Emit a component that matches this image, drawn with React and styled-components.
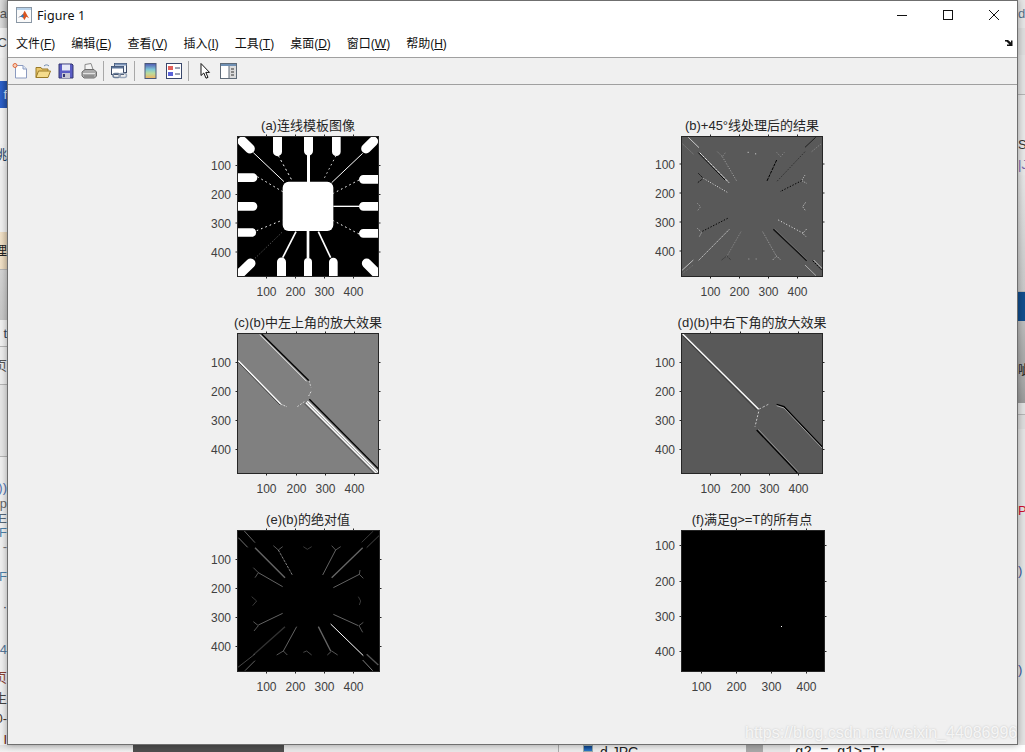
import React from 'react';
import styled, { createGlobalStyle } from 'styled-components';

const Global = createGlobalStyle`
  html, body { margin: 0; padding: 0; background: #e9e9e9; overflow: hidden; }
  * { box-sizing: border-box; }
`;

const Desktop = styled.div`
  position: relative;
  width: 1025px;
  height: 752px;
  overflow: hidden;
  display: grid;
  grid-template-columns: 7px 1011px 7px;
  grid-template-rows: 745px 7px;
  font-family: "Liberation Sans", "Noto Sans CJK SC", sans-serif;
`;
const Strip = styled.div`
  display: flex;
  flex-direction: column;
  overflow: hidden;
  background: #eaeaea;
`;
const Band = styled.div`
  flex: none;
  height: ${p => p.$h}px;
  background: ${p => p.$bg || 'transparent'};
  color: ${p => p.$color || '#444'};
  border-bottom: ${p => (p.$line ? '1px solid #b5b5b5' : '0')};
  font-size: 13px;
  line-height: ${p => p.$h}px;
  display: flex;
  justify-content: ${p => (p.$start ? 'flex-start' : 'flex-end')};
  overflow: hidden;
  white-space: nowrap;
`;
const BottomStrip = styled.div`
  grid-column: 1 / 4;
  display: flex;
  overflow: hidden;
  background: #ececec;
`;
const BottomPart = styled.div`
  flex: none;
  width: ${p => p.$w}px;
  background: ${p => p.$bg || 'transparent'};
  border-left: ${p => (p.$line ? '1px solid #aaa' : '0')};
  padding-left: ${p => p.$pad || 0}px;
  font: ${p => p.$font || '13px "Liberation Sans", sans-serif'};
  line-height: 15px;
  color: #222;
  white-space: nowrap;
  display: flex;
  align-items: flex-start;
  gap: 7px;
`;
const FileGlyph = styled.i`
  display: block;
  width: 10px;
  height: 7px;
  margin-top: 0;
  background: linear-gradient(#0d3f86, #2b78c8);
  border: 1px solid #9aa;
`;

const Window = styled.div`
  display: flex;
  flex-direction: column;
  border: 1px solid #6f6f6f;
  background: #f0f0f0;
  box-shadow: 0 0 7px rgba(0, 0, 0, 0.35);
  position: relative;
`;
const TitleBar = styled.div`
  height: 28px;
  flex: none;
  background: #fff;
  display: flex;
  align-items: center;
  padding-left: 8px;
`;
const AppTitle = styled.div`
  margin-left: 5px;
  font: 12.5px "Noto Sans", sans-serif;
  letter-spacing: 0.1px;
  color: #111;
  flex: 1;
`;
const WinButton = styled.div`
  width: 46px;
  height: 28px;
  display: flex;
  align-items: center;
  justify-content: center;
`;
const MenuBar = styled.div`
  height: 29px;
  flex: none;
  background: #fff;
  border-bottom: 1px solid #a0a0a0;
  display: flex;
  align-items: center;
  gap: 16px;
  padding: 0 4px 1px 8px;
`;
const MenuItem = styled.div`
  font-size: 12px;
  color: #111;
  white-space: nowrap;
  u { text-underline-offset: 1px; }
`;
const DockArrow = styled.svg`
  margin-left: auto;
  margin-bottom: 1px;
`;
const Toolbar = styled.div`
  height: 27px;
  flex: none;
  border-bottom: 1px solid #a0a0a0;
  display: flex;
  align-items: center;
  padding-bottom: 1px;
`;
const ToolButton = styled.div`
  width: 23px;
  height: 22px;
  display: flex;
  align-items: center;
  justify-content: center;
`;
const Separator = styled.div`
  width: 1px;
  height: 20px;
  background: #a8a8a8;
  margin: 0 ${p => p.$r || 3}px 0 3px;
`;
const FigureArea = styled.div`
  flex: 1;
  display: grid;
  grid-template-columns: 142px 142px;
  grid-auto-rows: 159px;
  column-gap: 302px;
  row-gap: 38px;
  padding: 33px 0 0 229px;
`;
const Plot = styled.figure`
  margin: 0;
  display: flex;
  flex-direction: column;
  gap: 2px;
`;
const PlotTitle = styled.figcaption`
  height: 16px;
  display: flex;
  justify-content: center;
  font-size: 13px;
  line-height: 16px;
  color: #262626;
  white-space: nowrap;
`;
const AxesSvg = styled.svg`
  display: block;
  overflow: visible;
  flex: none;
  text {
    font: 12px "Liberation Sans", sans-serif;
    fill: #404040;
  }
`;
const Watermark = styled.div`
  position: absolute;
  left: 745px;
  top: 723px;
  font-size: 16px;
  line-height: 20px;
  color: rgba(255, 255, 255, 0.8);
  text-shadow: 0 0 2px rgba(120, 120, 120, 0.4);
  white-space: nowrap;
`;

/* ---------- plot drawings, coordinates are 3x pixels of the axes ---------- */
const Lines = ({ items }) => (
  <g fill="none">
    {items.map(([d, c, w = 3, dash], i) => (
      <path key={i} d={d} stroke={c} strokeWidth={w} strokeDasharray={dash} />
    ))}
  </g>
);

const Template = () => (
  <g fill="#fff">
    <rect x="218" y="215" width="152" height="148" rx="18" />
    <path d="M189 78h27v47a13 13 0 0 1-27 0zM282 78h27v45a13 13 0 0 1-27 0zM366 78h26v47a13 13 0 0 1-26 0z" />
    <path d="M81 190h48a13 13 0 0 1 0 26h-48zM81 276h48a13 13 0 0 1 0 26h-48zM81 355h48a13 13 0 0 1 0 25h-48z" />
    <path d="M507 195h-47a13 13 0 0 0 0 26h47zM507 276h-47a13 13 0 0 0 0 26h47zM507 357h-47a13 13 0 0 0 0 26h47z" />
    <path d="M201 500v-44a13 13 0 0 1 27 0v44zM282 500v-44a12 12 0 0 1 24 0v44zM357 500v-44a13 13 0 0 1 26 0v44z" />
    <g stroke="#fff" strokeWidth="29" strokeLinecap="round">
      <path d="M97 94L120 116M490 94L468 116M122 460L75 505M470 460L510 500" />
    </g>
    <rect x="291" y="135" width="9" height="82" />
    <rect x="290" y="361" width="8" height="84" />
    <Lines items={[
      ['M130 128L222 215', '#fff', 3],
      ['M458 130L365 218', '#fff', 3],
      ['M370 289H447', '#fff', 4],
      ['M218 443L258 365', '#fff', 5],
      ['M325 365L362 443', '#fff', 5],
      ['M205 137L248 215', '#fff', 3, '6 9'],
      ['M378 137L340 210', '#ccc', 3, '5 9'],
      ['M142 200L218 245', '#fff', 3, '5 9'],
      ['M447 210L370 250', '#fff', 3, '5 9'],
      ['M140 362L218 330', '#fff', 3, '5 9'],
      ['M447 372L370 332', '#fff', 3, '5 9'],
      ['M135 445L218 365', '#555', 3, '4 5'],
    ]} />
  </g>
);

const PlotB = () => (
  <Lines items={[
    ['M85 82L117 113', '#ccc'],
    ['M68 102L100 132', '#888', 3, '4 4'],
    ['M115 128L195 210', '#000', 3],
    ['M119 128L207 218', '#eee', 3, '9 2'],
    ['M172 125L187 140L197 127', '#888', 3, '4 4'],
    ['M187 140L230 213', '#aaa', 3, '3 5'],
    ['M263 127h3M287 130v3', '#ddd', 3],
    ['M350 127L362 140L373 127', '#888', 3, '4 4'],
    ['M350 150L320 215', '#000', 3, '9 3'],
    ['M435 125L350 215', '#333', 3, '5 4'],
    ['M435 112L467 82', '#000', 2],
    ['M455 125L485 100', '#888', 3, '4 4'],
    ['M115 190L130 205L113 218', '#111', 3, '6 3'],
    ['M130 205L202 247', '#ddd', 3, '3 5'],
    ['M435 195L425 212L440 220', '#aaa', 3, '4 3'],
    ['M425 212L360 245', '#000', 3, '4 5'],
    ['M112 280L122 290L112 303', '#999', 3, '4 4'],
    ['M437 277L428 290L437 303', '#aaa', 3, '5 3'],
    ['M203 325L125 365', '#000', 3, '4 5'],
    ['M112 355L125 367L118 380', '#aaa', 3, '4 3'],
    ['M355 330L430 370', '#eee', 3, '3 6'],
    ['M440 357L428 370L438 380', '#bbb', 3, '4 3'],
    ['M208 358L115 452', '#bbb', 3, '5 2'],
    ['M243 365L200 440', '#888', 3, '3 3'],
    ['M185 450L200 438L213 450', '#333', 3, '4 3'],
    ['M308 365L350 440', '#999', 3, '3 3'],
    ['M338 450L350 438L362 450', '#aaa', 3, '4 3'],
    ['M340 358L440 452', '#111', 4],
    ['M344 356L442 450', '#777', 2],
    ['M265 447h3M287 447h3', '#aaa', 3],
    ['M100 450L65 482', '#bbb', 3],
    ['M68 490L100 465', '#777', 3, '3 3'],
    ['M435 465L468 497', '#aaa', 3],
    ['M458 452L485 480', '#000', 3, '6 3'],
    ['M461 450L488 477', '#eee', 2],
  ]} />
);

const PlotC = () => (
  <Lines items={[
    ['M155 72L297 212', '#000', 4],
    ['M150 74L290 214', '#f4f4f4', 3],
    ['M85 152L212 282', '#fff', 4],
    ['M85 157L210 285', '#222', 2],
    ['M212 282L230 290', '#ddd', 3, '6 3'],
    ['M297 212L303 232', '#ccc', 3, '6 4'],
    ['M303 245L296 258', '#ddd', 3, '6 4'],
    ['M262 290L283 275', '#ccc', 3, '6 4'],
    ['M298 268L507 478', '#000', 4],
    ['M290 276L502 488', '#fff', 10],
    ['M290 276L502 488', '#444', 2],
    ['M283 281L495 493', '#333', 2],
  ]} />
);

const PlotD = () => (
  <Lines items={[
    ['M68 72L296 298', '#fff', 4],
    ['M66 76L290 300', '#222', 2],
    ['M296 298L325 283', '#bbb', 3, '8 5'],
    ['M296 305L285 350', '#ccc', 3, '6 5'],
    ['M350 283L372 290L488 412', '#000', 4],
    ['M350 287L372 294L486 414', '#ccc', 2],
    ['M290 360L412 488', '#000', 4],
    ['M295 358L415 486', '#aaa', 2],
  ]} />
);

const PlotE = () => (
  <Lines items={[
    ['M85 98L113 127', '#888', 2.5],
    ['M103 78L135 113', '#777', 2.5],
    ['M135 128L225 218', '#666', 4],
    ['M190 122L205 135L218 125', '#666', 2.5],
    ['M205 135L247 210', '#999', 2.5, '8 3'],
    ['M280 125L292 133L305 125', '#444', 2.5],
    ['M365 122L377 135L392 125', '#666', 2.5],
    ['M377 135L338 210', '#777', 2.5],
    ['M458 128L365 218', '#666', 4],
    ['M455 112L490 78', '#444', 2.5],
    ['M470 128L507 92', '#555', 2.5],
    ['M130 188L145 203L135 218', '#666', 2.5],
    ['M145 203L218 245', '#777', 2.5],
    ['M450 195L448 208L460 220', '#666', 2.5],
    ['M448 208L370 248', '#777', 2.5],
    ['M125 275L140 288L128 302', '#444', 2.5],
    ['M445 275L452 288L448 300', '#444', 2.5],
    ['M218 325L145 360', '#777', 2.5],
    ['M130 350L145 362L132 378', '#666', 2.5],
    ['M370 328L445 362', '#777', 2.5],
    ['M460 352L447 362L458 382', '#666', 2.5],
    ['M225 365L130 450', '#333', 4],
    ['M135 447L80 490', '#555', 2.5],
    ['M135 467L105 497', '#777', 2.5],
    ['M260 365L220 438', '#777', 2.5],
    ['M200 450L220 438L232 450', '#666', 2.5],
    ['M280 442L290 438L305 450', '#555', 2.5],
    ['M325 365L362 438', '#666', 4],
    ['M352 450L365 438L383 450', '#666', 2.5],
    ['M362 357L460 452', '#fff', 3],
    ['M470 448L505 480', '#555', 4],
    ['M458 465L488 497', '#999', 2.5],
  ]} />
);

const PlotF = () => <rect x="363" y="363" width="3" height="3" fill="#fff" />;

const Axes = ({ w, h, origin, fill, xt, yt, labels = [100, 200, 300, 400], children }) => (
  <AxesSvg width={w} height={h} viewBox={`0 0 ${w} ${h}`}>
    <svg x="0" y="0" width={w} height={h} viewBox={`${origin[0]} ${origin[1]} ${w * 3} ${h * 3}`}>
      <rect x={origin[0]} y={origin[1]} width={w * 3} height={h * 3} fill={fill} />
      {children}
    </svg>
    <rect x="0.5" y="0.5" width={w - 1} height={h - 1} fill="none" stroke="#262626" />
    {xt.map(x => (
      <path key={x} d={`M${x} -1.5V0M${x} ${h}v1.5`} stroke="#262626" fill="none" />
    ))}
    {yt.map(y => (
      <path key={y} d={`M-1.5 ${y}H0M${w} ${y}h1.5`} stroke="#262626" fill="none" />
    ))}
    {xt.map((x, i) => (
      <text key={x} x={x} y={h + 19} textAnchor="middle">{labels[i]}</text>
    ))}
    {yt.map((y, i) => (
      <text key={y} x={-6} y={y + 4.5} textAnchor="end">{labels[i]}</text>
    ))}
  </AxesSvg>
);

const plots = [
  { title: '(a)连线模板图像', w: 142, h: 141, origin: [81, 78], fill: '#000', xt: [29.5, 58.5, 87.5, 116.5], yt: [29.5, 58.5, 87, 116], C: Template },
  { title: '(b)+45°线处理后的结果', w: 142, h: 141, origin: [63, 78], fill: '#595959', xt: [29.5, 58.5, 87.5, 116.5], yt: [28, 57, 86, 115], C: PlotB },
  { title: '(c)(b)中左上角的放大效果', w: 142, h: 141, origin: [81, 69], fill: '#808080', xt: [29.5, 59.5, 88.5, 117.5], yt: [29.5, 58.5, 87.5, 116.5], C: PlotC },
  { title: '(d)(b)中右下角的放大效果', w: 142, h: 141, origin: [63, 69], fill: '#595959', xt: [29.5, 59.5, 88.5, 117.5], yt: [29.5, 58.5, 87.5, 116.5], C: PlotD },
  { title: '(e)(b)的绝对值', w: 143, h: 142, origin: [81, 75], fill: '#000', xt: [29.5, 58.5, 87.5, 116.5], yt: [29.5, 58.5, 87.5, 116.5], C: PlotE },
  { title: '(f)满足g>=T的所有点', w: 144, h: 142, origin: [63, 75], fill: '#000', xt: [20.5, 55.5, 90.5, 125.5], yt: [15.5, 51.5, 86.5, 121.5], C: PlotF },
];

/* ---------- window + toolbar icons ---------- */
const MatlabIcon = () => (
  <svg width="16" height="16" viewBox="0 0 16 16">
    <rect x="0.5" y="0.5" width="15" height="15" fill="#fafafa" stroke="#8a97a5" />
    <rect x="1" y="1" width="14" height="2" fill="#b8d2ea" />
    <path d="M2 10.5l3-1.5 2-2 1.5-3.2c1 .6 2.6 5 4.5 7.2-1.2-.3-2-1.2-2.6-1.2-.8.8-1.4 3-2.2 3.2-.6-2-1.6-3-2.6-3.6z" fill="#d9541e" />
    <path d="M2 10.5l3-1.5 2-2 .9 2.4-1.6 1.2-1.1-.8z" fill="#2f79b8" />
  </svg>
);
const MinIcon = () => (
  <svg width="10" height="10" viewBox="0 0 10 10"><path d="M0 5.5H10" stroke="#111" /></svg>
);
const MaxIcon = () => (
  <svg width="10" height="10" viewBox="0 0 10 10"><rect x="0.5" y="0.5" width="9" height="9" fill="none" stroke="#111" /></svg>
);
const CloseIcon = () => (
  <svg width="10" height="10" viewBox="0 0 10 10"><path d="M0 0L10 10M10 0L0 10" stroke="#111" /></svg>
);

const NewIcon = () => (
  <svg width="16" height="16" viewBox="0 0 16 16">
    <path d="M3.5 2.5H11l3.5 3.5v9h-11z" fill="#fff" stroke="#8b9bc0" />
    <path d="M11 2.5V6h3.5" fill="#dfe8f6" stroke="#8b9bc0" />
    <circle cx="3" cy="2.5" r="2" fill="#f7d0b8" stroke="#e2683a" />
  </svg>
);
const OpenIcon = () => (
  <svg width="16" height="16" viewBox="0 0 16 16">
    <path d="M1 14.5V4.5h5l1 1.5h6v2" fill="#e9c66a" stroke="#9a7a26" />
    <path d="M1 14.5l2.5-6.5h12l-2.5 6.5z" fill="#f5dc8c" stroke="#9a7a26" />
    <path d="M9 3c1.5-1.5 3.5-1.5 5 0" fill="none" stroke="#6d88aa" />
  </svg>
);
const SaveIcon = () => (
  <svg width="16" height="16" viewBox="0 0 16 16">
    <path d="M1 1h13l1 1v13H1z" fill="#5a5cc4" stroke="#34366f" />
    <rect x="4" y="1.5" width="8" height="6" fill="#e6e8f6" />
    <rect x="4" y="10" width="8" height="5" fill="#c6c6d4" />
    <rect x="5" y="11" width="2" height="3" fill="#34366f" />
  </svg>
);
const PrintIcon = () => (
  <svg width="16" height="16" viewBox="0 0 16 16">
    <path d="M4 8V1.5l6-1 2 6" fill="#f4f4f4" stroke="#8a8a8a" />
    <path d="M1 9l3-2.5h9l2.5 2.5v4l-2 2H3l-2-2z" fill="#a9a9a9" stroke="#6e6e6e" />
    <path d="M2 10.5h12" stroke="#e2e2e2" />
    <path d="M3 13h10" stroke="#777" />
  </svg>
);
const LinkIcon = () => (
  <svg width="17" height="16" viewBox="0 0 17 16">
    <rect x="3.5" y="0.5" width="12" height="9" fill="#eef3fa" stroke="#3b4a66" />
    <rect x="3.5" y="0.5" width="12" height="2" fill="#7b93b8" />
    <rect x="0.5" y="3.5" width="12" height="8" fill="#fff" stroke="#3b4a66" />
    <rect x="0.5" y="3.5" width="12" height="2" fill="#5b7398" />
    <rect x="2" y="10.5" width="7" height="4" rx="2" fill="none" stroke="#6d7f99" strokeWidth="1.5" />
    <rect x="8" y="10.5" width="7.5" height="4" rx="2" fill="none" stroke="#9aa8bb" strokeWidth="1.5" />
  </svg>
);
const ColorbarIcon = () => (
  <svg width="13" height="16" viewBox="0 0 13 16">
    <defs>
      <linearGradient id="cbar" x1="0" y1="0" x2="0" y2="1">
        <stop offset="0" stopColor="#4e56b0" />
        <stop offset="0.4" stopColor="#7fc7d6" />
        <stop offset="0.65" stopColor="#b9dc9c" />
        <stop offset="1" stopColor="#f2b060" />
      </linearGradient>
    </defs>
    <rect x="1" y="0.5" width="11" height="15" fill="url(#cbar)" stroke="#4a5878" />
  </svg>
);
const LegendIcon = () => (
  <svg width="16" height="16" viewBox="0 0 16 16">
    <rect x="0.5" y="0.5" width="15" height="15" fill="#fff" stroke="#39476b" />
    <rect x="2" y="3" width="5" height="4" fill="#e2605c" />
    <rect x="2" y="9" width="5" height="4" fill="#5a62d8" />
    <path d="M9 5h5M9 11h5" stroke="#39476b" />
  </svg>
);
const CursorIcon = () => (
  <svg width="12" height="16" viewBox="0 0 12 16">
    <path d="M1 0.5V12.5L3.8 10L6 15.2L8 14.4L5.8 9.4H9.5z" fill="#fff" stroke="#111" />
  </svg>
);
const PanelIcon = () => (
  <svg width="17" height="16" viewBox="0 0 17 16">
    <rect x="0.5" y="0.5" width="16" height="15" fill="#fff" stroke="#5f6b78" />
    <rect x="1" y="1" width="15" height="2" fill="#6f90b4" />
    <rect x="9" y="3" width="7" height="12" fill="#dcdcdc" />
    <path d="M9 3v12" stroke="#5f6b78" />
    <path d="M11 6h3M11 9h3M11 12h3" stroke="#333" />
  </svg>
);
const DockIcon = () => (
  <DockArrow width="8" height="7" viewBox="0 0 8 7">
    <path d="M0 1h3l3 2.5V1.5h1.5V7H2V5.5h2.5L1.5 2.5H0z" fill="#111" />
  </DockArrow>
);

const menus = [
  ['文件', 'F'], ['编辑', 'E'], ['查看', 'V'], ['插入', 'I'],
  ['工具', 'T'], ['桌面', 'D'], ['窗口', 'W'], ['帮助', 'H'],
];

const leftBands = [
  { h: 28, bg: 'linear-gradient(90deg,#dcdcdc,#c4c4c4)', t: 'ta', color: '#555' },
  { h: 30, bg: '#f2f2f2', t: 'C', color: '#444' },
  { h: 23, bg: '#efefef' },
  { h: 27, bg: 'linear-gradient(90deg,#2d62cc,#2451a8)', t: 'f', color: '#d8e4f8' },
  { h: 36, bg: '#f4f4f4' },
  { h: 22, bg: '#f2f2f2', t: '桃', color: '#24405e' },
  { h: 66, bg: '#f0f0f0' },
  { h: 38, bg: 'linear-gradient(90deg,#f2e2c8,#e2d0b4)', t: '理', color: '#222', line: true },
  { h: 50, bg: 'linear-gradient(#d4d4d4,#c6c6c6)' },
  { h: 27, bg: '#f0f0f0', t: 't', color: '#345', line: true },
  { h: 38, bg: '#ededed', t: '页', color: '#555', line: true },
  { h: 72, bg: '#e6e6e6', line: true },
  { h: 23, bg: '#f0f0f0' },
  { h: 16, bg: '#f0f0f0', t: '))', color: '#4c6fae' },
  { h: 16, bg: '#f0f0f0', t: 'op', color: '#666' },
  { h: 13, bg: '#f0f0f0', t: 'E', color: '#567' },
  { h: 16, bg: '#f0f0f0', t: 'F', color: '#4d7fa8' },
  { h: 12, bg: '#f0f0f0', t: '-', color: '#777' },
  { h: 48, bg: '#f0f0f0', t: 'F', color: '#4d7fa8' },
  { h: 12, bg: '#f0f0f0', t: '·', color: '#345' },
  { h: 23, bg: '#f0f0f0' },
  { h: 28, bg: '#f0f0f0', t: '4', color: '#56789a' },
  { h: 28, bg: '#f0f0f0', t: '页', color: '#8a4030' },
  { h: 13, bg: '#f0f0f0', t: '生', color: '#444' },
  { h: 28, bg: '#f0f0f0', t: '0-', color: '#432' },
  { h: 14, bg: '#f0f0f0', t: 'I', color: '#702010' },
];
const rightBands = [
  { h: 28, bg: '#e6e6e6', t: 'd', color: '#56708a' },
  { h: 27, bg: '#dedede' },
  { h: 40, bg: '#e3e3e3', line: true },
  { h: 40, bg: '#e8e8e8' },
  { h: 20, bg: '#e8e8e8', t: 'S', color: '#333' },
  { h: 20, bg: '#e8e8e8', t: '|J', color: '#7a68b0' },
  { h: 117, bg: 'linear-gradient(#e6e6e6,#c8c8c8)', line: true },
  { h: 29, bg: '#124d8c' },
  { h: 38, bg: 'linear-gradient(#bdbdbd,#a9a9a9)' },
  { h: 22, bg: '#a9a9a9', t: '呲', color: '#222' },
  { h: 22, bg: 'linear-gradient(#a9a9a9,#9a9a9a)' },
  { h: 12, bg: '#e2e2e2', line: true },
  { h: 14, bg: '#dcdcdc' },
  { h: 75, bg: '#e4e4e4' },
  { h: 14, bg: '#e4e4e4', t: 'P', color: '#d01030' },
  { h: 46, bg: '#e4e4e4' },
  { h: 14, bg: '#e4e4e4', t: ')', color: '#3a5aa0' },
  { h: 85, bg: '#e4e4e4' },
  { h: 14, bg: '#e4e4e4', t: ')', color: '#3a5aa0' },
  { h: 81, bg: '#e4e4e4' },
];

const StripBands = ({ items, start }) => (
  <Strip>
    {items.map((b, i) => (
      <Band key={i} $h={b.h} $bg={b.bg} $color={b.color} $line={b.line} $start={start}>{b.t}</Band>
    ))}
  </Strip>
);

export default function App() {
  return (
    <>
      <Global />
      <Desktop>
        <StripBands items={leftBands} />
        <Window>
          <TitleBar>
            <MatlabIcon />
            <AppTitle>Figure 1</AppTitle>
            <WinButton><MinIcon /></WinButton>
            <WinButton><MaxIcon /></WinButton>
            <WinButton><CloseIcon /></WinButton>
          </TitleBar>
          <MenuBar>
            {menus.map(([n, k]) => (
              <MenuItem key={k}>{n}(<u>{k}</u>)</MenuItem>
            ))}
            <DockIcon />
          </MenuBar>
          <Toolbar>
            <ToolButton><NewIcon /></ToolButton>
            <ToolButton><OpenIcon /></ToolButton>
            <ToolButton><SaveIcon /></ToolButton>
            <ToolButton><PrintIcon /></ToolButton>
            <Separator $r={4} />
            <ToolButton><LinkIcon /></ToolButton>
            <Separator $r={4} />
            <ToolButton><ColorbarIcon /></ToolButton>
            <ToolButton><LegendIcon /></ToolButton>
            <Separator $r={5} />
            <ToolButton><CursorIcon /></ToolButton>
            <ToolButton><PanelIcon /></ToolButton>
          </Toolbar>
          <FigureArea>
            {plots.map(({ title, C, ...rest }) => (
              <Plot key={title}>
                <PlotTitle>{title}</PlotTitle>
                <Axes {...rest}><C /></Axes>
              </Plot>
            ))}
          </FigureArea>
        </Window>
        <StripBands items={rightBands} start />
        <BottomStrip>
          <BottomPart $w={133} $bg="linear-gradient(#dedede,#f2f2f2)" />
          <BottomPart $w={151} $bg="#4e4e4e" />
          <BottomPart $w={274} $bg="#e8e8e8" />
          <BottomPart $w={42} $line $pad={24}><FileGlyph /></BottomPart>
          <BottomPart $w={146} $bg="#f0f0f0" $font='14px "Liberation Sans", sans-serif'>d.JPG</BottomPart>
          <BottomPart $w={16} $bg="#a8a8a8" />
          <BottomPart $w={28} $bg="#e8e8e8" $line />
          <BottomPart $w={235} $bg="#fff" $pad={5} $font='14px "Liberation Mono", monospace'>g2 = g1&gt;=T;</BottomPart>
        </BottomStrip>
        <Watermark>https://blog.csdn.net/weixin_44086996</Watermark>
      </Desktop>
    </>
  );
}
